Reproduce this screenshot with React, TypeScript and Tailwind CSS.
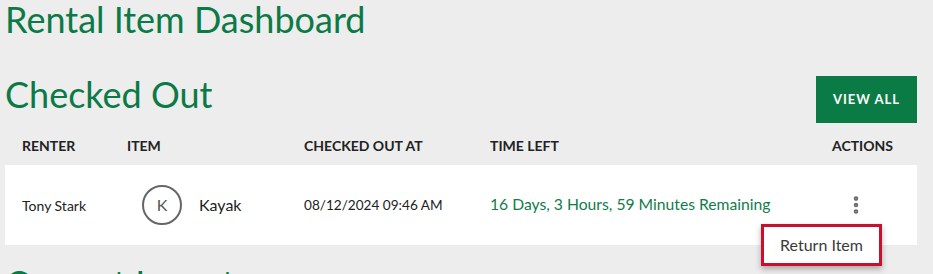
import { EllipsisVertical } from 'lucide-react'

const cols = 'grid grid-cols-[105px_177px_186px_1fr_60px] items-center'

const rentals = [
  {
    renter: 'Tony Stark',
    item: 'Kayak',
    checkedOutAt: '08/12/2024 09:46 AM',
    timeLeft: '16 Days, 3 Hours, 59 Minutes Remaining',
  },
]

function ActionsMenu() {
  return (
    <div className="relative ml-[12px] flex h-[24px] w-[24px] items-center justify-center">
      <EllipsisVertical size={22} strokeWidth={3} className="text-[#6b6b6b]" />
      <div className="absolute right-[-14px] top-[31px] flex h-[42px] w-[121px] items-center justify-center border-[3px] border-[#c8102e] bg-white text-[16px] text-[#3a3a3a] shadow-[0_3px_6px_rgba(0,0,0,0.3)]">
        Return Item
      </div>
    </div>
  )
}

export default function App() {
  return (
    <div className="min-h-screen overflow-hidden bg-[#ededed] pl-[5px] pr-[16px] font-[family-name:Lato,sans-serif]">
      <h1 className="text-[36px] leading-[38px] text-[#0b7a46]">Rental Item Dashboard</h1>

      <div className="mt-[37px] flex items-start justify-between">
        <h2 className="text-[36px] leading-[38px] text-[#0b7a46]">Checked Out</h2>
        <button className="mt-[1px] h-[47px] w-[101px] bg-[#0a7b45] text-[13px] font-bold tracking-[1px] text-white">
          VIEW ALL
        </button>
      </div>

      {/* Table header */}
      <div className={`${cols} mt-[7px] h-[30px] pl-[17px] pr-[25px] text-[14px] font-bold text-[#222]`}>
        <span>RENTER</span>
        <span>ITEM</span>
        <span>CHECKED OUT AT</span>
        <span>TIME LEFT</span>
        <span className="text-center">ACTIONS</span>
      </div>

      {/* Rows */}
      {rentals.map((r) => (
        <div key={r.renter} className={`${cols} mt-[5px] h-[80px] bg-white pl-[17px] pr-[25px] text-[#222]`}>
          <span className="text-[14px]">{r.renter}</span>
          <div className="flex items-center">
            <span className="ml-[15px] flex h-[40px] w-[40px] items-center justify-center rounded-full border-2 border-[#666] text-[16px] text-[#555]">
              {r.item[0]}
            </span>
            <span className="ml-[17px] text-[16px]">{r.item}</span>
          </div>
          <span className="text-[13.6px]">{r.checkedOutAt}</span>
          <span className="text-[15.7px] text-[#0f7d4a]">{r.timeLeft}</span>
          <ActionsMenu />
        </div>
      ))}

      <h2 className="mt-[19px] text-[36px] leading-[38px] text-[#0b7a46]">Current Inventory</h2>
    </div>
  )
}
